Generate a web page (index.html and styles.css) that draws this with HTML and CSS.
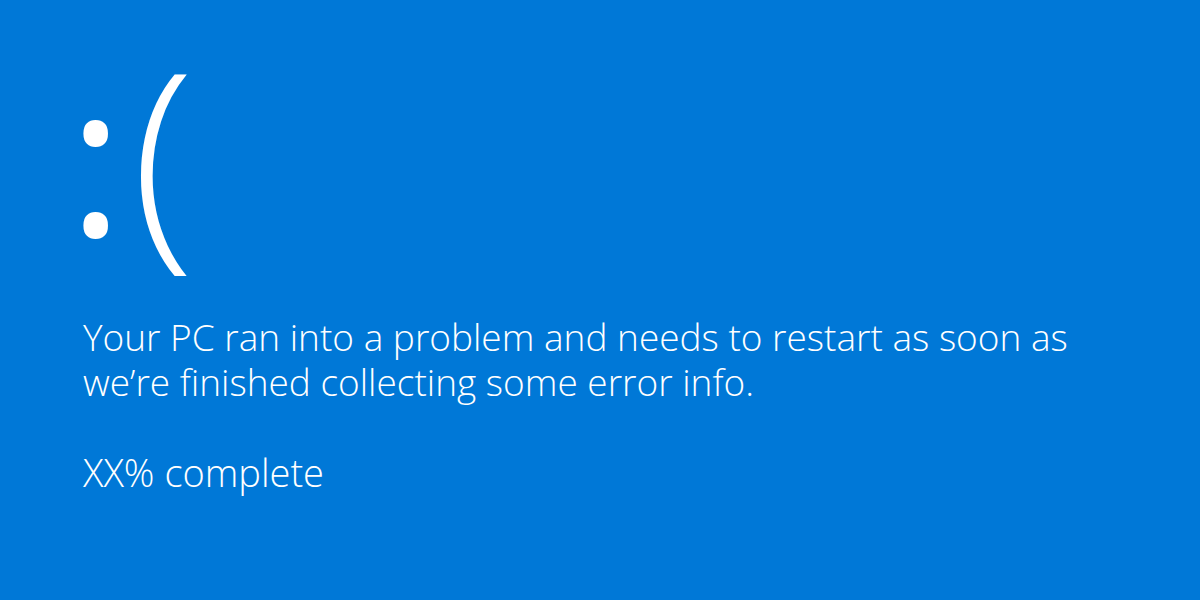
FILE: index.html
```html
<!DOCTYPE html>
<html lang="en">
<head>
<meta charset="utf-8">
<title>Your PC ran into a problem</title>
<link rel="stylesheet" href="styles.css">
</head>
<body>
<main class="screen">
  <div class="face"><span class="colon">:</span><span class="paren">(</span></div>
  <p class="message">Your PC ran into a problem and needs to restart as soon as<br>we’re finished collecting some error info.</p>
  <p class="progress">XX% complete</p>
</main>
</body>
</html>
```
FILE: styles.css
```css
html, body {
  margin: 0;
  padding: 0;
  background: #0078d7;
}
.screen {
  width: 1200px;
  height: 600px;
  box-sizing: border-box;
  padding: 0 0 0 83px;
  color: #fff;
  font-family: "Open Sans", "Noto Sans", sans-serif;
  font-weight: 300;
  overflow: hidden;
}
.face {
  font-size: 231px;
  line-height: 300px;
  height: 300px;
  margin: 0;
}
.colon {
  font-size: 211px;
  font-weight: 370;
  line-height: 0;
  vertical-align: 3px;
  margin-left: -15px;
}
.paren {
  margin-left: 8px;
}
.message {
  font-size: 37px;
  line-height: 45px;
  margin: 14px 0 0;
}
.progress {
  font-size: 38px;
  line-height: 45px;
  margin: 46px 0 0;
}
```
